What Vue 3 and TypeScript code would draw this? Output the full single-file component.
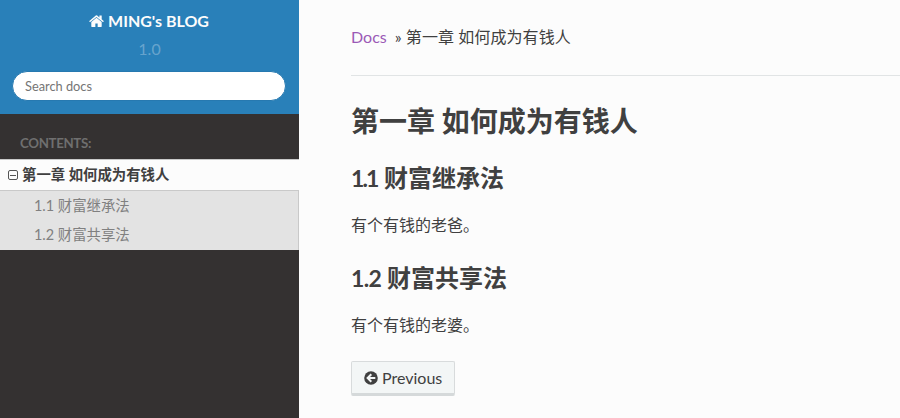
<script setup lang="ts">
interface Section {
  num: string
  title: string
  text: string
  tight: boolean
}

const chapter: string = '第一章 如何成为有钱人'
const sections: Section[] = [
  { num: '1.1', title: '财富继承法', text: '有个有钱的老爸。', tight: true },
  { num: '1.2', title: '财富共享法', text: '有个有钱的老婆。', tight: false },
]
</script>

<template>
  <div class="page">
    <nav class="side">
      <div class="side-search">
        <a class="brand">
          <svg class="home" viewBox="0 0 1664 1312" aria-hidden="true">
            <path d="M1408 768v480q0 26-19 45t-45 19H960V928H704v384H320q-26 0-45-19t-19-45V768q0-1 .5-3t.5-3l575-474 575 474q1 2 1 6zm223-69-62 74q-8 9-21 11h-3q-13 0-21-7L832 200 140 777q-12 8-24 7-13-2-21-11l-62-74q-8-10-7-23.500t11-21.500L756 55q32-26 76-26t76 26l244 204V64q0-14 9-23t23-9h192q14 0 23 9t9 23v408l219 182q10 8 11 21.500t-7 23.500z" />
          </svg>
          <span>MING's BLOG</span>
        </a>
        <div class="version">1.0</div>
        <input class="search" type="text" placeholder="Search docs" />
      </div>
      <p class="caption">CONTENTS:</p>
      <div class="current">
        <svg class="toggle" viewBox="0 0 10 10" aria-hidden="true">
          <rect x="0.500" y="0.500" width="9" height="9" rx="1.500" />
          <path d="M2 5.500h6" />
        </svg>
        <span>{{ chapter }}</span>
      </div>
      <ul class="sub">
        <li v-for="s in sections" :key="s.num">{{ s.num }} {{ s.title }}</li>
      </ul>
    </nav>
    <main class="content">
      <div class="crumbs">
        <a class="docs">Docs</a>
        <span class="here">» {{ chapter }}</span>
      </div>
      <h1>{{ chapter }}</h1>
      <section v-for="s in sections" :key="s.num">
        <h2><span class="num" :class="{ tight: s.tight }">{{ s.num }}</span>{{ s.title }}</h2>
        <p>{{ s.text }}</p>
      </section>
      <a class="prev">
        <svg viewBox="0 0 14 14" aria-hidden="true">
          <circle cx="7" cy="7" r="6.800" />
          <path d="M11.300 7H4M7.300 3.300 3.600 7l3.700 3.700" />
        </svg>
        <span>Previous</span>
      </a>
    </main>
  </div>
</template>

<style>
body {
  margin: 0;
  background: #fcfcfc;
}
</style>

<style scoped>
.page {
  display: flex;
  width: 900px;
  height: 418px;
  overflow: hidden;
  background: #fcfcfc;
  color: #404040;
  font-family: Lato, "Noto Sans CJK SC", sans-serif;
  font-size: 16px;
}
.side {
  width: 299px;
  flex: none;
  background: #343131;
}
.side-search {
  display: flex;
  flex-direction: column;
  align-items: center;
  box-sizing: border-box;
  height: 114px;
  padding-top: 9px;
  background: #2980b9;
}
.brand {
  display: flex;
  align-items: center;
  gap: 4px;
  height: 24px;
  padding-right: 1px;
  color: #fcfcfc;
  font-weight: 700;
  line-height: 24px;
}
.home {
  width: 15px;
  height: 12px;
  fill: #fcfcfc;
}
.version {
  height: 24px;
  margin-top: 4px;
  color: rgba(255, 255, 255, 0.3);
  line-height: 24px;
}
.search {
  box-sizing: border-box;
  width: 274px;
  height: 30px;
  margin: 10px 1px 0 0;
  padding: 0 12px;
  border: 1px solid #2779b0;
  border-radius: 50px;
  outline: none;
  background: #fff;
  font-family: Lato, sans-serif;
  font-size: 12.800px;
}
.search::placeholder {
  color: #757575;
}
.caption {
  height: 32px;
  margin: 13px 0 0;
  padding-left: 20px;
  color: #6f6f6f;
  font-size: 13.300px;
  font-weight: 700;
  letter-spacing: -0.350px;
  line-height: 32px;
}
.current {
  display: flex;
  align-items: center;
  gap: 4px;
  box-sizing: border-box;
  height: 32px;
  padding-left: 8px;
  border-top: 1px solid #c9c9c9;
  border-bottom: 1px solid #c9c9c9;
  background: #fcfcfc;
  font-size: 14.400px;
  font-weight: 700;
  line-height: 30px;
}
.current span {
  height: 30px;
}
.toggle {
  width: 10px;
  height: 10px;
  fill: none;
  stroke: #555;
  stroke-width: 1;
}
.sub {
  box-sizing: border-box;
  height: 59px;
  margin: 0;
  padding: 0;
  border-right: 1px solid #c9c9c9;
  background: #e3e3e3;
  color: #808080;
  font-size: 14.400px;
  list-style: none;
}
.sub li {
  height: 29px;
  padding-left: 34px;
  line-height: 30px;
}
.content {
  flex: 1;
  padding: 25px 0 0 52px;
}
.crumbs {
  display: flex;
  gap: 8px;
  box-sizing: border-box;
  height: 51px;
  border-bottom: 1px solid #e1e4e5;
  line-height: 24px;
}
.docs {
  color: #9b59b6;
}
.here {
  letter-spacing: 0.080px;
}
h1,
h2,
p {
  margin: 0;
}
h1 {
  height: 40px;
  margin-top: 25px;
  font-size: 28px;
  font-weight: 700;
  line-height: 40px;
}
section:first-of-type h2 {
  margin-top: 19px;
}
h2 {
  height: 36px;
  margin-top: 23px;
  font-size: 24px;
  font-weight: 700;
  line-height: 36px;
}
.num {
  display: inline-block;
  width: 36px;
  font-size: 23px;
  letter-spacing: -0.700px;
}
.num.tight {
  width: 33px;
  letter-spacing: -1.900px;
}
section p {
  height: 24px;
  margin-top: 17px;
  line-height: 24px;
}
.prev {
  display: inline-flex;
  align-items: center;
  gap: 4px;
  box-sizing: border-box;
  width: 104px;
  height: 35px;
  margin-top: 24px;
  padding: 0 0 0 12px;
  border: 1px solid #d8dbdc;
  border-bottom: 3px solid #d5d9da;
  border-radius: 2px;
  background: #f3f6f6;
  line-height: 24px;
}
.prev svg {
  width: 14px;
  height: 14px;
  fill: #404040;
}
.prev path {
  fill: none;
  stroke: #f3f6f6;
  stroke-width: 2;
}
</style>
